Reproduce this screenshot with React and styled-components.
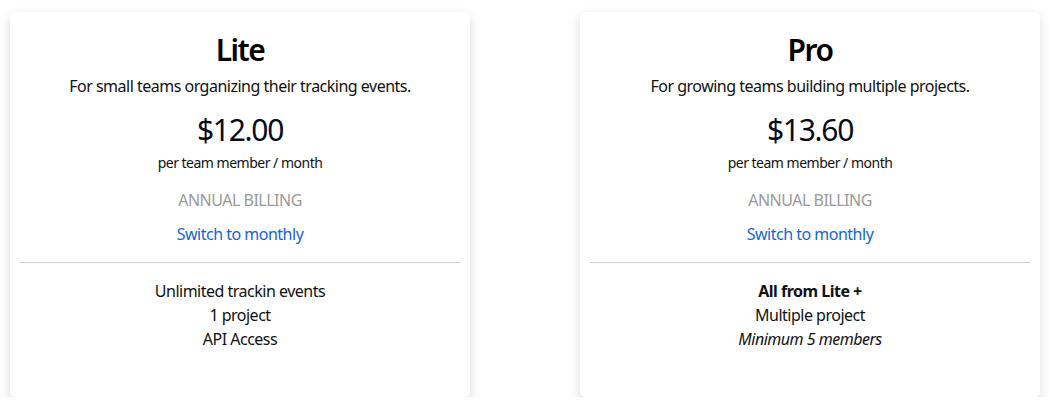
import React from 'react';
import styled, { createGlobalStyle } from 'styled-components';

const GlobalStyle = createGlobalStyle`
  body {
    margin: 0;
    background: #fff;
    font-family: 'Noto Sans', 'Open Sans', sans-serif;
    color: #111;
  }
`;

const PLANS = [
  {
    name: 'Lite',
    tagline: 'For small teams organizing their tracking events.',
    price: '$12.00',
    features: [
      { text: 'Unlimited trackin events' },
      { text: '1 project' },
      { text: 'API Access' },
    ],
  },
  {
    name: 'Pro',
    tagline: 'For growing teams building multiple projects.',
    price: '$13.60',
    features: [
      { text: 'All from Lite +', bold: true },
      { text: 'Multiple project' },
      { text: 'Minimum 5 members', italic: true },
    ],
  },
];

export default function App() {
  return (
    <>
      <GlobalStyle />
      <PricingGrid>
        {PLANS.map((plan) => (
          <PlanCard key={plan.name}>
            <PlanName>{plan.name}</PlanName>
            <Tagline>{plan.tagline}</Tagline>
            <Price>{plan.price}</Price>
            <PriceUnit>per team member / month</PriceUnit>
            <Billing>ANNUAL BILLING</Billing>
            <SwitchLink href="#">Switch to monthly</SwitchLink>
            <Divider />
            <FeatureList>
              {plan.features.map((f) => (
                <Feature key={f.text} bold={f.bold} italic={f.italic}>
                  {f.text}
                </Feature>
              ))}
            </FeatureList>
          </PlanCard>
        ))}
      </PricingGrid>
    </>
  );
}

const PricingGrid = styled.div`
  display: grid;
  grid-template-columns: 460px 460px;
  column-gap: 110px;
  padding: 12px 9px 0 10px;
`;

const PlanCard = styled.div`
  display: flex;
  flex-direction: column;
  align-items: center;
  padding: 20px 10px 46px;
  background: #fff;
  border-radius: 5px;
  box-shadow: 0 4px 12px rgba(0, 0, 0, 0.15);
  text-align: center;
  letter-spacing: -0.5px;
`;

const PlanName = styled.h2`
  margin: 0;
  font-size: 30px;
  line-height: 36px;
  font-weight: 600;
  letter-spacing: -1.5px;
  color: #000;
`;

const Tagline = styled.p`
  margin: 6px 0 0;
  font-size: 16px;
  line-height: 24px;
`;

const Price = styled.div`
  margin-top: 14px;
  font-size: 30px;
  line-height: 36px;
  letter-spacing: -1.3px;
  color: #0a0a1a;
`;

const PriceUnit = styled.div`
  margin-top: 5px;
  font-size: 14px;
  line-height: 20px;
`;

const Billing = styled.div`
  margin-top: 15px;
  font-size: 16px;
  line-height: 24px;
  color: #999;
`;

const SwitchLink = styled.a`
  margin-top: 10px;
  font-size: 16px;
  line-height: 24px;
  color: #1565d8;
  text-decoration: none;
`;

const Divider = styled.hr`
  align-self: stretch;
  margin: 16px 0 0;
  border: 0;
  border-top: 1px solid #d0d0d0;
`;

const FeatureList = styled.ul`
  list-style: none;
  margin: 16px 0 0;
  padding: 0;
`;

const Feature = styled.li`
  font-size: 16px;
  line-height: 24px;
  font-weight: ${(props) => (props.bold ? 700 : 400)};
  font-style: ${(props) => (props.italic ? 'italic' : 'normal')};
`;
